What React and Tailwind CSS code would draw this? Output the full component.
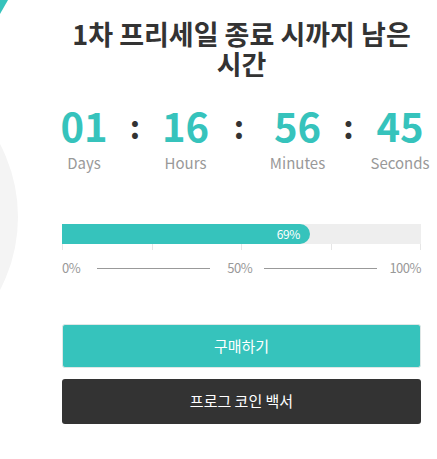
import React from 'react';

const font = { fontFamily: '"Noto Sans CJK KR", "Noto Sans", sans-serif' };

const Unit = ({ value, label, width }) => (
    <div className={`flex flex-col items-center ${width}`}>
        <span className="text-[40px] leading-[46px] font-bold text-[#36c3bc]">{value}</span>
        <span className="mt-[5px] text-[15px] leading-[20px] text-[#999]">{label}</span>
    </div>
);

const Colon = ({ width }) => (
    <div className={`flex justify-center ${width} text-[32px] leading-[46px] font-bold text-[#333]`}>:</div>
);

export default function App() {
    return (
        <div className="relative w-full h-[459px] overflow-hidden bg-white" style={font}>
            {/* decorative shapes */}
            <svg className="absolute left-0 top-0" width="12" height="16" viewBox="0 0 12 16">
                <polygon points="0,0 8,0 0,14" fill="#36c3bc" />
            </svg>
            <div className="absolute left-[-296px] top-[60px] w-[314px] h-[314px] rounded-full bg-[#f4f4f4]" />

            <div className="relative ml-[62px] w-[359px] pt-[19px]">
                <h1 className="text-center text-[27px] leading-[30px] font-bold text-[#333]">
                    1차 프리세일 종료 시까지 남은 시간
                </h1>

                {/* countdown */}
                <div className="mt-[23px] flex w-[365px]">
                    <Unit value="01" label="Days" width="w-[44px]" />
                    <Colon width="w-[58px]" />
                    <Unit value="16" label="Hours" width="w-[43px]" />
                    <Colon width="w-[64px]" />
                    <Unit value="56" label="Minutes" width="w-[53px]" />
                    <Colon width="w-[49px]" />
                    <Unit value="45" label="Seconds" width="w-[54px]" />
                </div>

                {/* progress */}
                <div className="mt-[51px] h-[20px] bg-[#eeeeee]">
                    <div className="h-full w-[69%] rounded-r-full bg-[#36c3bc] flex items-center justify-end pr-[10px]">
                        <span className="text-[12px] leading-none text-white tracking-[-0.5px]">69%</span>
                    </div>
                </div>
                <div className="flex justify-between h-[6px]">
                    {[0, 1, 2, 3, 4].map((i) => (
                        <div key={i} className="w-px h-full bg-[#e6e6e6]" />
                    ))}
                </div>
                <div className="mt-[10px] flex items-center text-[13px] leading-[16px] text-[#999] tracking-[-0.5px]">
                    <span>0%</span>
                    <div className="flex-1 mx-[17px] h-px bg-[#999]" />
                    <span>50%</span>
                    <div className="flex-1 mx-[12px] h-px bg-[#999]" />
                    <span>100%</span>
                </div>

                {/* buttons */}
                <button className="mt-[48px] w-full h-[44px] rounded-[3px] border border-[#dfe7e6] bg-[#36c3bc] text-white text-[15px]">
                    구매하기
                </button>
                <button className="mt-[11px] w-full h-[45px] rounded-[3px] bg-[#333333] text-white text-[15px]">
                    프로그 코인 백서
                </button>
            </div>
        </div>
    );
}
